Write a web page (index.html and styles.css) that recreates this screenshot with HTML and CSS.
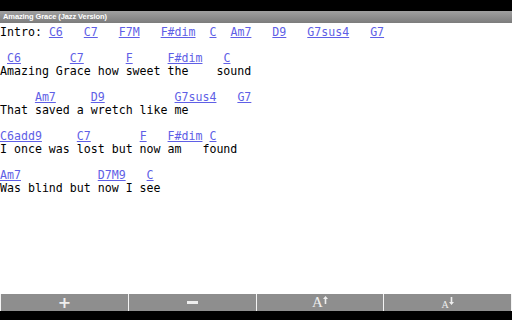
FILE: index.html
```html
<!DOCTYPE html>
<html lang="en">
<head>
  <meta charset="UTF-8" />
  <title>Amazing Grace (Jazz Version)</title>
  <link rel="stylesheet" href="styles.css">
</head>
<body>
  <div class="screen">
    <div class="status"></div>
    <div class="titlebar">Amazing Grace (Jazz Version)</div>

    <pre class="song">Intro: <span class="ch">C6</span>   <span class="ch">C7</span>   <span class="ch">F7M</span>   <span class="ch">F#dim</span>  <span class="ch">C</span>  <span class="ch">Am7</span>   <span class="ch">D9</span>   <span class="ch">G7sus4</span>   <span class="ch">G7</span>

 <span class="ch">C6</span>       <span class="ch">C7</span>      <span class="ch">F</span>     <span class="ch">F#dim</span>   <span class="ch">C</span>
Amazing Grace how sweet the    sound

     <span class="ch">Am7</span>     <span class="ch">D9</span>          <span class="ch">G7sus4</span>   <span class="ch">G7</span>
That saved a wretch like me

<span class="ch">C6add9</span>     <span class="ch">C7</span>       <span class="ch">F</span>   <span class="ch">F#dim</span> <span class="ch">C</span>
I once was lost but now am   found

<span class="ch">Am7</span>           <span class="ch">D7M9</span>   <span class="ch">C</span>
Was blind but now I see</pre>

    <div class="toolbar">
      <button class="tool"><span class="plus">+</span></button>
      <button class="tool"><span class="minus"></span></button>
      <button class="tool">
        <span class="font-a big">A</span>
        <svg class="arrow" width="5" height="8" viewBox="0 0 5 8"><path d="M2.5 0 L5 3 L3.3 3 L3.3 8 L1.7 8 L1.7 3 L0 3 Z" fill="#eee"/></svg>
      </button>
      <button class="tool">
        <span class="font-a small">A</span>
        <svg class="arrow down" width="5" height="8" viewBox="0 0 5 8"><path d="M2.5 8 L5 5 L3.3 5 L3.3 0 L1.7 0 L1.7 5 L0 5 Z" fill="#eee"/></svg>
      </button>
    </div>
    <div class="navbar"></div>
  </div>
</body>
</html>
```

FILE: styles.css
```css
* { box-sizing: border-box; }
body {
  margin: 0;
  background: #000;
}
.screen {
  width: 512px;
  height: 320px;
  display: flex;
  flex-direction: column;
  background: #fff;
  overflow: hidden;
}
.status {
  height: 11px;
  background: #000;
}
.titlebar {
  height: 12px;
  background: linear-gradient(#a0a0a0, #7c7c7c);
  color: #fff;
  font-family: "Liberation Sans", sans-serif;
  font-weight: bold;
  font-size: 7.5px;
  line-height: 12px;
  padding-left: 3px;
  letter-spacing: -0.1px;
}
.song {
  flex: 1;
  margin: 0;
  padding-top: 2.5px;
  font-family: "DejaVu Sans Mono", monospace;
  font-size: 11.6px;
  line-height: 13px;
  color: #000;
  white-space: pre;
}
.ch {
  color: #5f5fe6;
  text-decoration: underline;
}
.toolbar {
  height: 17px;
  display: flex;
  gap: 1px;
  padding: 0 1px;
  background: #f4f4f4;
}
.tool {
  flex: 1;
  border: none;
  margin: 0;
  padding: 0;
  background: #8e8e8e;
  display: flex;
  align-items: center;
  justify-content: center;
  color: #eee;
}
.plus {
  font-family: "DejaVu Sans", sans-serif;
  font-weight: bold;
  font-size: 16px;
  line-height: 1;
}
.minus {
  display: block;
  width: 11px;
  height: 3px;
  background: #eee;
}
.font-a {
  font-family: "Liberation Serif", serif;
  line-height: 1;
}
.font-a.big {
  font-size: 15px;
}
.font-a.small {
  font-size: 10px;
  margin-top: 4px;
}
.arrow {
  margin-top: -5px;
}
.arrow.down {
  margin-top: -3px;
}
.navbar {
  height: 9px;
  background: #000;
}
```
